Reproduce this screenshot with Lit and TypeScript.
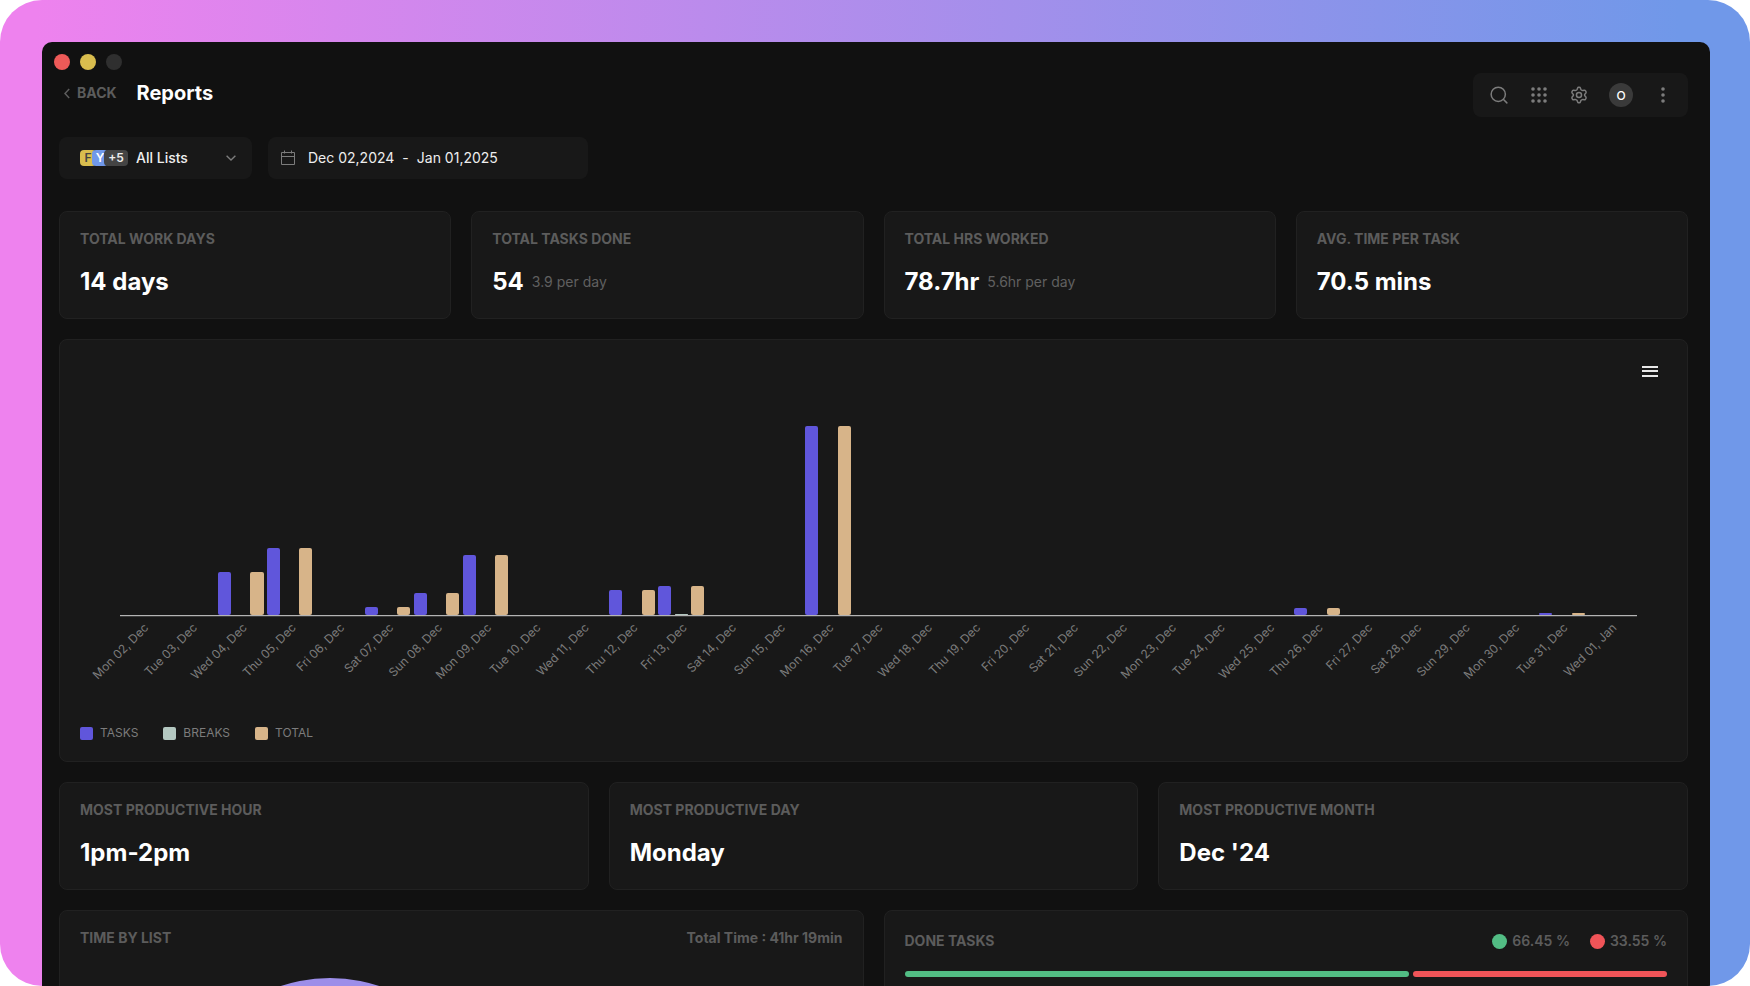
import { LitElement, html, svg, css } from "lit";
import { customElement, property } from "lit/decorators.js";

interface Stat {
  label: string;
  value: string;
  note?: string;
}

interface Day {
  name: string;
  tasks: number;
  breaks: number;
  total: number;
}

const SUMMARY: Stat[] = [
  { label: "TOTAL WORK DAYS", value: "14 days" },
  { label: "TOTAL TASKS DONE", value: "54", note: "3.9 per day" },
  { label: "TOTAL HRS WORKED", value: "78.7hr", note: "5.6hr per day" },
  { label: "AVG. TIME PER TASK", value: "70.5 mins" },
];

const PEAKS: Stat[] = [
  { label: "MOST PRODUCTIVE HOUR", value: "1pm-2pm" },
  { label: "MOST PRODUCTIVE DAY", value: "Monday" },
  { label: "MOST PRODUCTIVE MONTH", value: "Dec '24" },
];

const WEEKDAYS = ["Mon", "Tue", "Wed", "Thu", "Fri", "Sat", "Sun"];

// Share of the busiest day, in percent: [tasks, breaks]
const WORKED: Record<number, [number, number]> = {
  4: [22.8, 0],
  5: [35.4, 0],
  7: [4, 0],
  8: [11.9, 0],
  9: [31.7, 0],
  12: [13.2, 0],
  13: [15.3, 0.5],
  16: [100, 0],
  26: [3.8, 0],
  31: [0.9, 0],
};

const DAYS: Day[] = Array.from({ length: 31 }, (_, i) => {
  const date = i + 2;
  const inDec = date <= 31;
  const [tasks, breaks] = (inDec && WORKED[date]) || [0, 0];
  const num = String(inDec ? date : date - 31).padStart(2, "0");
  return {
    name: `${WEEKDAYS[i % 7]} ${num}, ${inDec ? "Dec" : "Jan"}`,
    tasks,
    breaks,
    total: tasks,
  };
});

@customElement("stat-card")
class StatCard extends LitElement {
  @property() label = "";
  @property() value = "";
  @property() note = "";

  static styles = css`
    :host {
      display: block;
      box-sizing: border-box;
      min-width: 0;
      padding: 16px 20px 19px;
      border: 1px solid #212121;
      border-radius: 8px;
      background: #181818;
    }
    .label {
      margin: 0 0 15px;
      font-size: 14px;
      line-height: 22px;
      font-weight: 700;
      color: #5c5c5c;
    }
    .row {
      display: flex;
      align-items: center;
      gap: 8px;
      margin: 0;
    }
    .value {
      font-size: 24px;
      line-height: 34px;
      font-weight: 700;
      color: #fff;
    }
    .note {
      font-size: 14px;
      line-height: 18px;
      color: #606060;
    }
  `;

  render() {
    return html`
      <h2 class="label">${this.label}</h2>
      <p class="row">
        <span class="value">${this.value}</span>
        ${this.note ? html`<span class="note">${this.note}</span>` : ""}
      </p>
    `;
  }
}

@customElement("activity-chart")
class ActivityChart extends LitElement {
  static styles = css`
    :host {
      display: block;
      box-sizing: border-box;
      padding: 20px;
      border: 1px solid #212121;
      border-radius: 8px;
      background: #181818;
    }
    .head {
      display: flex;
      justify-content: flex-end;
      padding-right: 5px;
    }
    .menu {
      width: 24px;
      height: 24px;
      padding: 0;
      border: 0;
      background: none;
      display: grid;
      place-items: center;
      color: #e8e8e8;
    }
    .plot {
      display: grid;
      grid-template-columns: repeat(31, minmax(0, 1fr));
      margin: 0 30px 0 40px;
    }
    .bars {
      height: 189px;
      padding-top: 42px;
      display: grid;
      grid-template-columns: repeat(3, 1fr);
      align-items: end;
      border-bottom: 1px solid #b4b4b4;
      box-shadow: 0 1px #3c3c3c;
    }
    .bar {
      width: 80%;
      border-radius: 2px;
    }
    .tasks {
      background: #6056db;
    }
    .breaks {
      background: #b3c7c0;
    }
    .total {
      background: #d7b489;
    }
    .tick {
      height: 105px;
      padding-top: 4px;
      display: flex;
      justify-content: flex-end;
      align-items: flex-start;
      margin-right: 28px;
    }
    .name {
      flex: none;
      font-size: 12px;
      line-height: 16px;
      white-space: nowrap;
      color: #7c7c7c;
      transform: rotate(-45deg);
      transform-origin: right top;
    }
    .legend {
      display: flex;
      gap: 25px;
      margin: 0;
      padding: 0;
      list-style: none;
    }
    .key {
      display: flex;
      align-items: center;
      gap: 7px;
      font-size: 12px;
      line-height: 16px;
      color: #7c7c7c;
    }
    .swatch {
      width: 13px;
      height: 13px;
      border-radius: 2px;
    }
  `;

  render() {
    return html`
      <div class="head">
        <button class="menu" aria-label="Chart menu">
          <svg width="16" height="12" viewBox="0 0 16 12" fill="currentColor">
            <rect y="0" width="16" height="2" />
            <rect y="4" width="16" height="2" />
            <rect y="9" width="16" height="2" />
          </svg>
        </button>
      </div>
      <div class="plot">
        ${DAYS.map(
          (d) => html`<div class="bars">
            <span class="bar tasks" style="height:${d.tasks}%"></span>
            <span class="bar breaks" style="height:${d.breaks}%"></span>
            <span class="bar total" style="height:${d.total}%"></span>
          </div>`
        )}
        ${DAYS.map(
          (d) => html`<div class="tick"><span class="name">${d.name}</span></div>`
        )}
      </div>
      <ul class="legend">
        <li class="key"><span class="swatch tasks"></span>TASKS</li>
        <li class="key"><span class="swatch breaks"></span>BREAKS</li>
        <li class="key"><span class="swatch total"></span>TOTAL</li>
      </ul>
    `;
  }
}

@customElement("app-root")
class AppRoot extends LitElement {
  static styles = css`
    :host {
      display: block;
      height: 100vh;
      font-family: Inter, "Liberation Sans", sans-serif;
      color: #fff;
      background: #fff;
    }
    * {
      box-sizing: border-box;
    }
    button,
    select {
      font: inherit;
      color: inherit;
    }
    .frame {
      height: 100%;
      padding: 42px 40px 0 42px;
      overflow: hidden;
      border-radius: 42px;
      background: linear-gradient(90deg, #ee82ee 2%, #7098e9 96%);
    }
    .window {
      height: 100%;
      padding: 12px 22px 0 17px;
      overflow: hidden;
      border-radius: 10px 10px 0 0;
      background: #111;
      display: flex;
      flex-direction: column;
    }
    .lights {
      display: flex;
      gap: 10px;
      margin: 0 0 3px -5px;
    }
    .light {
      width: 16px;
      height: 16px;
      border-radius: 50%;
    }
    .close {
      background: #ee5a58;
    }
    .minimise {
      background: #d9bd4e;
    }
    .zoom {
      background: #2f2f2f;
    }
    .header {
      display: flex;
      justify-content: space-between;
      align-items: flex-start;
      margin-bottom: 20px;
    }
    .heading {
      display: flex;
      align-items: center;
      gap: 20px;
      height: 40px;
      padding-left: 5px;
    }
    .back {
      display: flex;
      align-items: center;
      gap: 7px;
      font-size: 14px;
      line-height: 18px;
      font-weight: 700;
      color: #5c5c5c;
      text-decoration: none;
    }
    .title {
      margin: 0;
      font-size: 20px;
      line-height: 24px;
      font-weight: 700;
    }
    .tools {
      display: flex;
      align-items: center;
      gap: 16px;
      height: 44px;
      padding: 0 13px 0 14px;
      border-radius: 8px;
      background: #181818;
    }
    .tool {
      width: 24px;
      height: 24px;
      padding: 0;
      border: 0;
      border-radius: 50%;
      background: none;
      display: grid;
      place-items: center;
    }
    .avatar {
      margin: 0 2px;
      background: #3a3a3a;
      color: #fff;
      font-size: 12px;
      font-weight: 500;
    }
    .filters {
      display: flex;
      gap: 16px;
      margin-bottom: 32px;
    }
    .filter {
      display: flex;
      align-items: center;
      height: 42px;
      border: 0;
      border-radius: 8px;
      background: #181818;
      font-size: 14px;
      line-height: 18px;
    }
    .lists {
      width: 193px;
      padding: 0 16px 0 21px;
      gap: 8px;
      font-weight: 500;
      color: #eee;
    }
    .chips {
      display: flex;
      flex: none;
    }
    .chip {
      display: grid;
      place-items: center;
      height: 16px;
      border-radius: 4px;
      font-size: 12px;
      line-height: 16px;
      font-weight: 600;
    }
    .chip + .chip {
      margin-left: -4px;
    }
    .first {
      width: 16px;
      background: #d9bd4e;
      color: #444;
    }
    .second {
      width: 16px;
      background: #7098e9;
      color: #fff;
    }
    .more {
      width: 24px;
      background: #444;
      color: #eee;
    }
    .select {
      flex: 1;
      min-width: 0;
      padding: 0;
      border: 0;
      background: none;
      appearance: none;
    }
    .select option {
      background: #181818;
    }
    .muted {
      flex: none;
      color: #7c7c7c;
    }
    .dates {
      width: 320px;
      padding: 0 12px;
      gap: 12px;
      color: #eee;
    }
    .range {
      display: flex;
      gap: 8px;
    }
    .rows {
      display: grid;
      gap: 20px;
    }
    .four {
      display: grid;
      grid-template-columns: repeat(4, minmax(0, 1fr));
      gap: 20px;
    }
    .three {
      display: grid;
      grid-template-columns: repeat(3, minmax(0, 1fr));
      gap: 20px;
    }
    .two {
      display: grid;
      grid-template-columns: repeat(2, minmax(0, 1fr));
      gap: 20px;
    }
    .card {
      padding: 16px 20px 20px;
      border: 1px solid #212121;
      border-radius: 8px;
      background: #181818;
    }
    .top {
      display: flex;
      justify-content: space-between;
      font-size: 14px;
      line-height: 22px;
      font-weight: 700;
      color: #5c5c5c;
    }
    .tall {
      align-items: center;
      height: 28px;
      margin-bottom: 16px;
    }
    .name {
      margin: 0;
      font: inherit;
    }
    .pie {
      width: 500px;
      max-width: 100%;
      padding-top: 29px;
      display: flex;
      justify-content: center;
    }
    .shares {
      display: flex;
      gap: 20px;
      font-weight: 600;
    }
    .share {
      display: flex;
      align-items: center;
      gap: 5px;
    }
    .dot {
      width: 15px;
      height: 15px;
      border-radius: 50%;
    }
    .split {
      display: flex;
      gap: 4px;
    }
    .part {
      height: 6px;
      border-radius: 3px;
    }
    .green {
      background: #52bd84;
    }
    .red {
      background: #f05458;
    }
  `;

  private icon(body: unknown) {
    return html`<svg
      width="18"
      height="18"
      viewBox="0 0 24 24"
      fill="none"
      stroke="currentColor"
      stroke-width="2"
      stroke-linecap="round"
      stroke-linejoin="round"
    >
      ${body}
    </svg>`;
  }

  private get toolbar() {
    const grid = [4, 12, 20].flatMap((y) =>
      [4, 12, 20].map((x) => svg`<circle cx=${x} cy=${y} r="2.4" />`)
    );
    return html`<nav class="tools">
      <button class="tool muted" aria-label="Search">
        ${this.icon(svg`<circle cx="11" cy="11" r="9.5" /><path d="M18 18 22.5 22.5" />`)}
      </button>
      <button class="tool muted" aria-label="Apps">
        ${this.icon(svg`<g fill="currentColor" stroke="none">${grid}</g>`)}
      </button>
      <button class="tool muted" aria-label="Settings">
        ${this.icon(svg`<circle cx="12" cy="12" r="3.4" />
          <path d="M9.6 4.4 10.2 2.6Q10.5 1.7 11.4 1.7H12.6Q13.5 1.7 13.8 2.6L14.4 4.4Q14.7 5.2 15.5 5.6Q16.3 6.1 17.2 6L19 5.6Q20 5.4 20.5 6.2L21.3 7.5Q21.8 8.4 21.2 9.2L20 10.6Q19.4 11.2 19.4 12Q19.4 12.8 20 13.4L21.2 14.8Q21.8 15.6 21.3 16.5L20.5 17.8Q20 18.6 19 18.4L17.2 18Q16.3 17.9 15.5 18.4Q14.7 18.8 14.4 19.6L13.8 21.4Q13.5 22.3 12.6 22.3H11.4Q10.5 22.3 10.2 21.4L9.6 19.6Q9.3 18.8 8.5 18.4Q7.7 17.9 6.8 18L5 18.4Q4 18.6 3.5 17.8L2.7 16.5Q2.2 15.6 2.8 14.8L4 13.4Q4.6 12.8 4.6 12Q4.6 11.2 4 10.6L2.8 9.2Q2.2 8.4 2.7 7.5L3.5 6.2Q4 5.4 5 5.6L6.8 6Q7.7 6.1 8.5 5.6Q9.3 5.2 9.6 4.4Z" />`)}
      </button>
      <button class="tool avatar" aria-label="Account">O</button>
      <button class="tool muted" aria-label="More">
        ${this.icon(svg`<g fill="currentColor" stroke="none">
          <circle cx="12" cy="4" r="2.4" /><circle cx="12" cy="12" r="2.4" />
          <circle cx="12" cy="20" r="2.4" /></g>`)}
      </button>
    </nav>`;
  }

  private stat(s: Stat) {
    return html`<stat-card
      .label=${s.label}
      .value=${s.value}
      .note=${s.note ?? ""}
    ></stat-card>`;
  }

  render() {
    return html`<div class="frame">
      <main class="window">
        <div class="lights">
          <span class="light close"></span>
          <span class="light minimise"></span>
          <span class="light zoom"></span>
        </div>
        <header class="header">
          <div class="heading">
            <a class="back" href="#back">
              <svg width="6" height="11" viewBox="0 0 6 11" fill="none" stroke="currentColor" stroke-width="1.5">
                <path d="M5.2 1 1 5.5 5.2 10" />
              </svg>
              BACK
            </a>
            <h1 class="title">Reports</h1>
          </div>
          ${this.toolbar}
        </header>
        <div class="filters">
          <label class="filter lists">
            <span class="chips">
              <span class="chip first">F</span>
              <span class="chip second">Y</span>
              <span class="chip more">+5</span>
            </span>
            <select class="select" aria-label="Lists">
              <option>All Lists</option>
            </select>
            <svg class="muted" width="10" height="6" viewBox="0 0 10 6" fill="none" stroke="currentColor" stroke-width="1.4">
              <path d="M.6.7 5 5 9.4.7" />
            </svg>
          </label>
          <button class="filter dates">
            <svg class="muted" width="16" height="16" viewBox="0 0 16 16" fill="none" stroke="currentColor">
              <path d="M1.5 2.5h13v12h-13zM1.5 6.5h13M4.5.5v3M11.5.5v3" />
            </svg>
            <span class="range">
              <span>Dec 02,2024</span><span>-</span><span>Jan 01,2025</span>
            </span>
          </button>
        </div>
        <div class="rows">
          <section class="four">${SUMMARY.map((s) => this.stat(s))}</section>
          <activity-chart></activity-chart>
          <section class="three">${PEAKS.map((s) => this.stat(s))}</section>
          <section class="two">
            <div class="card">
              <div class="top">
                <h2 class="name">TIME BY LIST</h2>
                <span>Total Time : 41hr 19min</span>
              </div>
              <div class="pie">
                <svg width="310" height="310" viewBox="0 0 310 310">
                  <circle cx="155" cy="155" r="155" fill="#9c8ee9" />
                </svg>
              </div>
            </div>
            <div class="card">
              <div class="top tall">
                <h2 class="name">DONE TASKS</h2>
                <div class="shares">
                  <span class="share"><span class="dot green"></span>66.45 %</span>
                  <span class="share"><span class="dot red"></span>33.55 %</span>
                </div>
              </div>
              <div class="split">
                <span class="part green" style="flex:66.45"></span>
                <span class="part red" style="flex:33.55"></span>
              </div>
            </div>
          </section>
        </div>
      </main>
    </div>`;
  }
}
